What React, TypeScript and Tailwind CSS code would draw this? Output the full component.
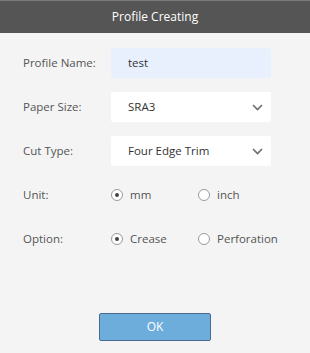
import { ReactNode } from 'react'

const font = { fontFamily: '"Open Sans", "Noto Sans", sans-serif' }

function Chevron() {
  return (
    <svg width="11" height="7" viewBox="0 0 11 7" className="mr-[8px]">
      <path d="M1 1 L5.5 5.5 L10 1" fill="none" stroke="#6b6b6b" strokeWidth="1.6" />
    </svg>
  )
}

function Radio({ checked, label }: { checked: boolean; label: string }) {
  return (
    <div className="flex items-center">
      <span className="w-[12px] h-[12px] rounded-full border border-[#9a9a9a] bg-white flex items-center justify-center">
        {checked && <span className="w-[4px] h-[4px] rounded-full bg-[#444]" />}
      </span>
      <span className="ml-[7px] text-[11.5px] text-[#555]">{label}</span>
    </div>
  )
}

function Row({ label, children }: { label: string; children: ReactNode }) {
  return (
    <div className="flex items-center h-[30px]">
      <div className="w-[88px] text-[11.5px] text-[#555]">{label}</div>
      {children}
    </div>
  )
}

export default function App() {
  return (
    <div className="w-[310px] h-[353px] bg-[#f4f4f4] flex flex-col" style={font}>
      <div className="h-[33px] bg-[#555555] border-t border-[#7a7a7a] flex items-center justify-center text-white text-[12px]">
        Profile Creating
      </div>
      <div className="flex flex-col gap-[14px] pl-[23px] pt-[15px]">
        <Row label="Profile Name:">
          <div className="w-[160px] h-[30px] rounded-[2px] bg-[#e8f0fe] flex items-center pl-[17px] text-[11.5px] text-[#333]">
            test
          </div>
        </Row>
        <Row label="Paper Size:">
          <div className="w-[160px] h-[30px] rounded-[2px] bg-white flex items-center justify-between pl-[17px] text-[11.5px] text-[#333]">
            SRA3
            <Chevron />
          </div>
        </Row>
        <Row label="Cut Type:">
          <div className="w-[160px] h-[30px] rounded-[2px] bg-white flex items-center justify-between pl-[17px] text-[11.5px] text-[#333]">
            Four Edge Trim
            <Chevron />
          </div>
        </Row>
        <Row label="Unit:">
          <div className="w-[87px]"><Radio checked label="mm" /></div>
          <Radio checked={false} label="inch" />
        </Row>
        <Row label="Option:">
          <div className="w-[87px]"><Radio checked label="Crease" /></div>
          <Radio checked={false} label="Perforation" />
        </Row>
      </div>
      <div className="flex justify-center mt-[59px]">
        <button className="w-[112px] h-[28px] rounded-[2px] bg-[#6daddc] border border-[#4a6a90] text-white text-[12px]">
          OK
        </button>
      </div>
    </div>
  )
}
